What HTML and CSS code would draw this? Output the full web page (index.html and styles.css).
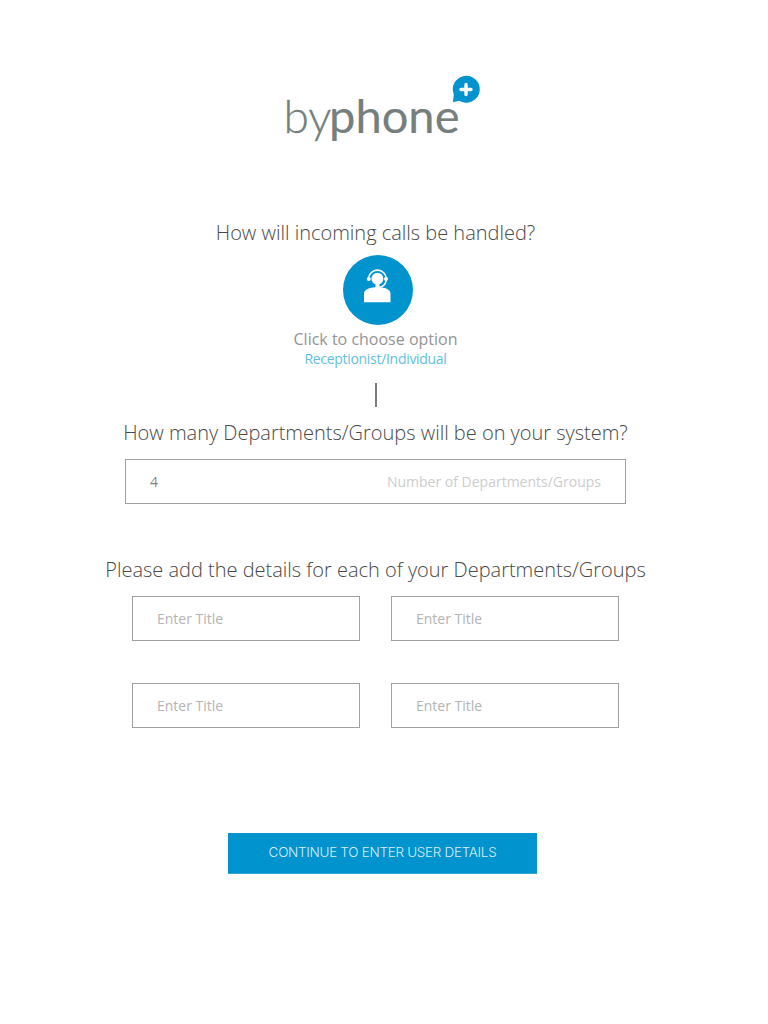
FILE: index.html
```html
<!DOCTYPE html>
<html lang="en">
<head>
<meta charset="utf-8">
<title>byphone - Departments</title>
<link rel="stylesheet" href="styles.css">
</head>
<body>
<main class="page">
  <header class="brand">
    <svg class="logo" width="220" height="85" viewBox="275 65 220 85" role="img" aria-label="byphone plus">
      <text class="logo-by" x="283.500" y="132.700" textLength="48" lengthAdjust="spacingAndGlyphs">by</text>
      <text class="logo-phone" x="329" y="132.700" textLength="130.500" lengthAdjust="spacingAndGlyphs">phone</text>
      <path class="blue" d="M466.200 75.8a13.500 13.500 0 1 1-7 25l-6.300 1.500.9-7.800a13.500 13.500 0 0 1 12.400-18.700z"/>
      <path class="plus" d="M466 84.500v10M461 89.500h10"/>
    </svg>
  </header>
  <section class="calls">
    <h1 class="question"><span>How will incoming calls be handled?</span></h1>
    <button class="choice" type="button" aria-label="Choose option">
      <svg width="70" height="70" viewBox="0 0 70 70">
        <path class="band" d="M25.500 24a8.900 8.900 0 0 1 17.800 0c0 4.500-3 7.500-7 8.600"/>
        <circle class="white" cx="34.400" cy="23.700" r="6"/>
        <circle class="white" cx="25.800" cy="24" r="2"/>
        <circle class="white" cx="43" cy="24" r="2"/>
        <path class="white" d="M32.500 29h4v3.200c6 .3 11 2.500 11 6.300V47.300H21V38.500c0-3.800 5.500-6 11.500-6.300z"/>
      </svg>
    </button>
    <p class="hint"><span>Click to choose option</span></p>
    <p class="selected"><span>Receptionist/Individual</span></p>
    <div class="divider"></div>
  </section>
  <section class="amount">
    <h2 class="question"><span>How many Departments/Groups will be on your system?</span></h2>
    <div class="field wide"><span class="value">4</span><span class="note">Number of Departments/Groups</span></div>
  </section>
  <section class="details">
    <h2 class="question"><span>Please add the details for each of your Departments/Groups</span></h2>
    <div class="grid">
      <div class="field"><span>Enter Title</span></div>
      <div class="field"><span>Enter Title</span></div>
      <div class="field"><span>Enter Title</span></div>
      <div class="field"><span>Enter Title</span></div>
    </div>
  </section>
  <button class="continue" type="button"><span>CONTINUE TO ENTER USER DETAILS</span></button>
</main>
</body>
</html>
```
FILE: styles.css
```css
* { box-sizing: border-box; }
body { margin: 0; background: #fff; font-family: "Open Sans", sans-serif; }
.page { width: 751px; height: 1024px; padding-top: 65px; display: flex; flex-direction: column; align-items: center; }
.brand { height: 154px; padding-left: 19px; }
.logo { display: block; }
.logo-by, .logo-phone { font-family: Lato, sans-serif; font-size: 46px; fill: #757f7d; stroke: #757f7d; }
.logo-by { font-weight: 300; stroke-width: .3; }
.logo-phone { font-weight: 400; stroke-width: .15; }
.blue { fill: #0093cd; }
.plus { fill: none; stroke: #fff; stroke-width: 3.4; stroke-linecap: round; }
section { display: flex; flex-direction: column; align-items: center; }
.question { margin: 0; font-size: 20px; line-height: 28px; font-weight: 300; color: #484848; white-space: nowrap; letter-spacing: -.01px; }
.calls { height: 200px; }
.choice { margin: 8px 0 4px 5px; padding: 0; width: 70px; height: 70px; border: 0; border-radius: 50%; background: #0093cd; }
.choice svg { display: block; }
.white { fill: #fff; }
.band { fill: none; stroke: #fff; stroke-width: 1.6; }
.hint { margin: 0; height: 20px; font-size: 16px; line-height: 20px; color: #949494; }
.selected { margin: 0; height: 20px; font-size: 14px; line-height: 20px; letter-spacing: -.3px; color: #5fc0e2; }
.divider { margin: 14px 0 0 1px; width: 2px; height: 24px; background: #7b7b7b; }
.amount { height: 137px; }
.field { height: 45px; border: 1px solid #a0a0a0; padding: 0 24px; display: flex; align-items: center; font-size: 14px; line-height: 20px; color: #b4b4b4; }
.wide { width: 501px; margin-top: 12px; justify-content: space-between; }
.value { color: #858585; }
.note { color: #cdcdcd; }
.details { height: 277px; }
.grid { margin-top: 12px; display: grid; grid-template-columns: 228px 228px; gap: 42px 31px; }
.continue { margin-left: 14px; width: 309px; height: 41px; padding: 0 0 2px; border: 0; border-bottom: 1px solid #30a8d7; background: #0093cd; color: #d8eff9; font: 300 13.5px/20px Inter, sans-serif; letter-spacing: -.3px; white-space: nowrap; }
```
